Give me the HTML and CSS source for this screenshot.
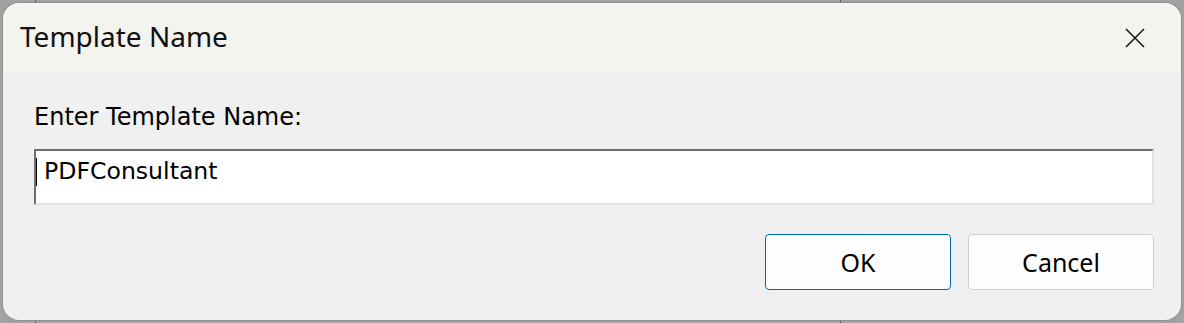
FILE: index.html
```html
<!DOCTYPE html>
<html>

<head>
     <title>Template Name</title>
     <link rel="stylesheet" href="styles.css">
</head>

<body>
     <div class="dialog">
          <div class="titlebar">
               <span class="title">Template Name</span>
               <button class="close" aria-label="Close">
                    <svg width="20" height="20" viewBox="0 0 20 20">
                         <path d="M1 1 L19 19 M19 1 L1 19" stroke="#1a1a1a" stroke-width="1.6" fill="none" />
                    </svg>
               </button>
          </div>
          <div class="content">
               <label class="prompt">Enter Template Name:</label>
               <div class="field">
                    <span class="caret"></span>
                    <span class="value">PDFConsultant</span>
               </div>
               <div class="actions">
                    <button class="btn default">OK</button>
                    <button class="btn">Cancel</button>
               </div>
          </div>
     </div>
</body>

</html>
```

FILE: styles.css
```css
html,
body {
     margin: 0;
     height: 100%;
}

body {
     background-color: #a2a2a2;
     background-image:
          linear-gradient(to right, transparent 35px, #5a5a5a 35px, #5a5a5a 36px, transparent 36px),
          linear-gradient(to right, transparent 840px, #5a5a5a 840px, #5a5a5a 841px, transparent 841px);
     padding: 3px;
     box-sizing: border-box;
}

.dialog {
     height: 100%;
     display: flex;
     flex-direction: column;
     background-color: #f0f0f0;
     border-radius: 16px;
     overflow: hidden;
     box-shadow: 0 0 0 1px #8e8e8e;
}

.titlebar {
     height: 69px;
     flex-shrink: 0;
     display: flex;
     align-items: center;
     justify-content: space-between;
     padding-left: 17px;
     background-color: #f3f3ef;
}

.title {
     font-family: "Noto Sans", sans-serif;
     font-size: 28px;
     color: #111;
     margin-top: -3px;
}

.close {
     width: 60px;
     height: 69px;
     margin-right: 16px;
     border: none;
     background: none;
     padding: 0;
     display: flex;
     align-items: center;
     justify-content: center;
}

.content {
     flex: 1;
     display: flex;
     flex-direction: column;
     padding: 30px 27px 30px 31px;
     font-family: "DejaVu Sans", sans-serif;
}

.prompt {
     font-size: 24px;
     color: #000;
     line-height: 30px;
}

.field {
     margin-top: 17px;
     height: 56px;
     box-sizing: border-box;
     background-color: #fff;
     border-top: 2px solid #6e6e6e;
     border-left: 2px solid #6e6e6e;
     border-right: 2px solid #e3e3e3;
     border-bottom: 2px solid #e3e3e3;
     display: flex;
     align-items: flex-start;
     padding-top: 5px;
}

.caret {
     width: 1px;
     height: 28px;
     margin-top: 2px;
     background-color: #000;
}

.value {
     margin-left: 7px;
     font-size: 23.6px;
     line-height: 30px;
     color: #000;
}

.actions {
     margin-top: auto;
     display: flex;
     justify-content: flex-end;
     gap: 17px;
}

.btn {
     width: 186px;
     height: 56px;
     font-family: "Noto Sans", sans-serif;
     font-size: 25px;
     color: #000;
     background-color: #fdfdfd;
     border: 1px solid #d0d0d0;
     border-radius: 4px;
     padding: 0;
}

.btn.default {
     border: 1.5px solid #0067c0;
}
```
